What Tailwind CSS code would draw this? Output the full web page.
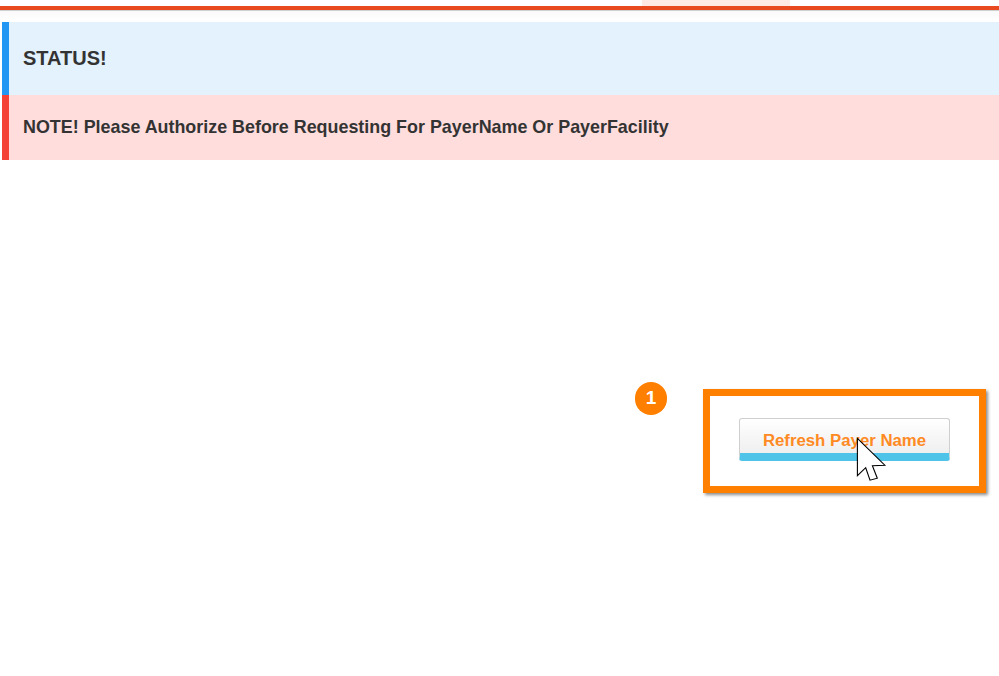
<!doctype html>
<html>
<head>
<meta charset="utf-8">
<script src="https://cdn.jsdelivr.net/npm/@tailwindcss/browser@4"></script>
</head>
<body class="bg-white font-['Liberation_Sans',sans-serif]">
<div class="relative w-[999px] h-[676px] overflow-hidden bg-white">
  <div class="h-[6px] pl-[642px]"><div class="w-[148px] h-full bg-[#ffe9e5]"></div></div>
  <div class="h-[4px] bg-[#e8491f]"></div>
  <div class="h-[1px] bg-[#cfcfcf]"></div>
  <div class="h-[11px] bg-gradient-to-b from-[#fafafa] to-white"></div>
  <div class="ml-[2px] flex flex-col">
    <div class="h-[73px] flex items-center pl-[14px] pb-[2px] border-l-[7px] border-[#2196f3] bg-[#e3f2fd] text-[#333] text-[20px] font-bold">STATUS!</div>
    <div class="h-[65px] flex items-center pl-[14px] border-l-[7px] border-[#f44336] bg-[#ffdddd] text-[#333] text-[17.9px] font-bold">NOTE! Please Authorize Before Requesting For PayerName Or PayerFacility</div>
  </div>
  <div class="absolute left-[635px] top-[382px] w-[32px] h-[33px] rounded-full bg-[#ff8000] flex items-center justify-center text-white text-[19px] font-bold">1</div>
  <div class="absolute left-[703px] top-[389px] w-[283px] h-[104px] border-[7px] border-[#ff8000] shadow-[2px_2px_3px_rgba(0,0,0,0.45)]"></div>
  <button class="absolute left-[739px] top-[418px] w-[211px] h-[43px] pt-[9px] rounded-[3px] border border-[#cfcfcf] border-b-[8px] border-b-[#50c3e8] bg-gradient-to-b from-white to-[#efefef] text-[#ff8a24] text-[16.8px] font-bold font-['Liberation_Sans',sans-serif]">Refresh Payer Name</button>
  <svg class="absolute left-[850px] top-[432px]" width="42" height="54" viewBox="850 432 42 54"><path d="M857.4 438.4 L884.8 465.2 L872.4 465.8 L877.3 478.2 L870 480.2 L865.7 467.7 L857.4 475.6 Z" fill="#fff" stroke="#000" stroke-width="1.1" stroke-linejoin="miter"/></svg>
</div>
</body>
</html>
